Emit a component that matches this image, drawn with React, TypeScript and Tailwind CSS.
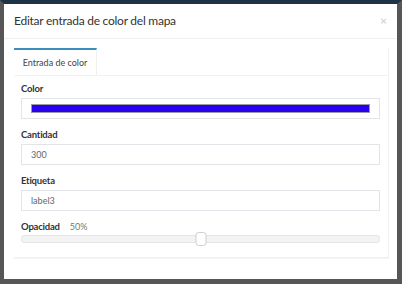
export default function App() {
  return (
    <div className="w-[402px] h-[288px] bg-white overflow-hidden" style={{ fontFamily: 'Lato, "Open Sans", sans-serif' }}>
      <div className="h-[284px] border-l-4 border-r-[5px] border-b-[5px] border-t-4 border-[#565656] border-t-[#1e3446] bg-white flex flex-col">
        {/* header */}
        <div className="h-[35px] flex items-center justify-between pl-[10px] pr-[10px] border-b border-[#f0f0f0]">
          <h1 className="text-[12px] tracking-[-0.25px] text-[#333]">Editar entrada de color del mapa</h1>
          <span className="text-[12px] font-bold text-[#d4d4d4] leading-none">×</span>
        </div>

        {/* body */}
        <div className="pl-[10px] pr-[8px] pt-[9px]">
          <div className="border-r border-b border-[#f0f0f0] shadow-[0_1px_1px_rgba(0,0,0,0.04)] bg-white">
            <div className="flex border-b border-[#f2f2f2]">
              <div className="w-[83px] h-[27px] border-t-2 border-[#3c8dbc] border-r border-r-[#f0f0f0] flex items-center justify-center text-[9px] text-[#444]">
                Entrada de color
              </div>
            </div>

            <div className="pl-[7px] pr-[8px] pt-[6px] pb-[14px]">
              <div className="mb-[9px]">
                <div className="h-[14px] flex items-center text-[9.5px] tracking-[-0.2px] font-bold text-[#333]">Color</div>
                <div className="mt-[2px] h-[21px] border border-[#e3e3ea] flex items-center px-[9px]">
                  <div className="w-full h-[9px] bg-[#2a00f2] border border-[#9a9aa8]" />
                </div>
              </div>

              <div className="mb-[9px]">
                <div className="h-[14px] flex items-center text-[9.5px] tracking-[-0.2px] font-bold text-[#333]">Cantidad</div>
                <div className="mt-[2px] h-[21px] border border-[#e3e3ea] flex items-center px-[9px] text-[9px] text-[#666]">300</div>
              </div>

              <div className="mb-[9px]">
                <div className="h-[14px] flex items-center text-[9.5px] tracking-[-0.2px] font-bold text-[#333]">Etiqueta</div>
                <div className="mt-[2px] h-[21px] border border-[#e3e3ea] flex items-center px-[9px] text-[9px] text-[#666]">label3</div>
              </div>

              <div>
                <div className="h-[14px] flex items-center gap-[10px]">
                  <span className="text-[9.5px] tracking-[-0.2px] font-bold text-[#333]">Opacidad</span>
                  <span className="text-[9px] text-[#777]">50%</span>
                </div>
                <div className="relative mt-[1px] h-[8px] rounded-[3px] bg-[#f3f3f3] border border-[#e6e6e6]">
                  <div className="absolute left-1/2 top-1/2 -translate-x-1/2 -translate-y-1/2 w-[11px] h-[14px] rounded-[3px] bg-white border border-[#cfcfcf]" />
                </div>
              </div>
            </div>
          </div>
        </div>
      </div>
    </div>
  );
}
